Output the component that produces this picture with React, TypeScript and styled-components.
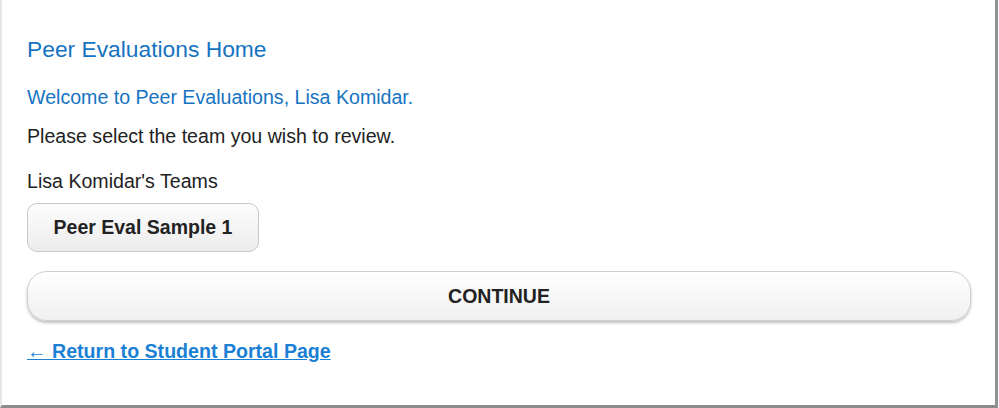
import React from 'react'
import styled, { createGlobalStyle } from 'styled-components'

const GlobalStyle = createGlobalStyle`
  html, body {
    margin: 0;
    padding: 0;
    background: #ffffff;
  }
  body {
    font-family: "Liberation Sans", Arial, Helvetica, sans-serif;
    color: #222222;
  }
`

const Frame = styled.div`
  box-sizing: border-box;
  width: 998px;
  height: 408px;
  border-left: 2px solid #e6e6e6;
  border-right: 3px solid #929292;
  border-bottom: 3px solid #8c8c8c;
  padding: 37px 25px 0 25px;
  display: flex;
  flex-direction: column;
`

const Title = styled.h1`
  margin: 0;
  font-size: 22.8px;
  line-height: 24px;
  font-weight: normal;
  color: #1673c2;
`

const Welcome = styled.h2`
  margin: 25px 0 0;
  font-size: 19.6px;
  line-height: 22px;
  font-weight: normal;
  color: #1673c2;
`

const Text = styled.p<{ $gap: number }>`
  margin: ${(p) => p.$gap}px 0 0;
  font-size: 19.6px;
  line-height: 22px;
`

const TeamButton = styled.button`
  align-self: flex-start;
  margin-top: 11px;
  box-sizing: border-box;
  width: 232px;
  height: 49px;
  border: 1px solid #c9c9c9;
  border-radius: 10px;
  background: linear-gradient(#fdfdfd, #ececec);
  font-family: inherit;
  font-size: 19.5px;
  font-weight: bold;
  color: #222222;
  cursor: pointer;
`

const ContinueButton = styled.button`
  margin-top: 19px;
  box-sizing: border-box;
  width: 944px;
  height: 50px;
  border: 1px solid #cfcfcf;
  border-radius: 20px;
  background: linear-gradient(#ffffff, #f0f0f0);
  box-shadow: 0 2px 3px rgba(0, 0, 0, 0.25);
  font-family: inherit;
  font-size: 19.5px;
  font-weight: bold;
  color: #222222;
  cursor: pointer;
`

const BackLink = styled.a`
  align-self: flex-start;
  margin-top: 19px;
  font-size: 19.6px;
  line-height: 22px;
  font-weight: bold;
  color: #1a80d4;
  text-decoration: underline;
`

export default function App() {
  return (
    <>
      <GlobalStyle />
      <Frame>
        <Title>Peer Evaluations Home</Title>
        <Welcome>Welcome to Peer Evaluations, Lisa Komidar.</Welcome>
        <Text $gap={17}>Please select the team you wish to review.</Text>
        <Text $gap={23}>Lisa Komidar's Teams</Text>
        <TeamButton>Peer Eval Sample 1</TeamButton>
        <ContinueButton>CONTINUE</ContinueButton>
        <BackLink href="#">← Return to Student Portal Page</BackLink>
      </Frame>
    </>
  )
}
